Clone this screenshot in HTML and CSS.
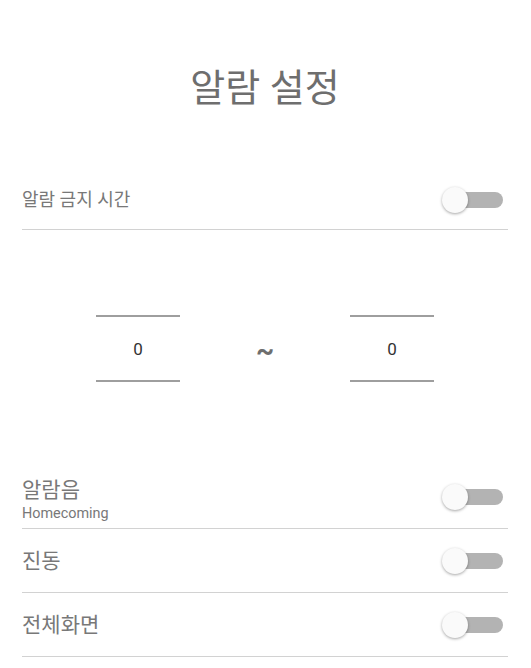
FILE: index.html
```html
<!DOCTYPE html>
<html lang="ko">
<head>
<meta charset="utf-8">
<link rel="stylesheet" href="styles.css">
</head>
<body>
<div class="page">
  <div class="header"><h1 class="title">알람 설정</h1></div>
  <div class="row row-first">
    <div class="label-sm">알람 금지 시간</div>
    <div class="switch"><span class="track"></span><span class="thumb"></span></div>
  </div>
  <div class="time-section">
    <div class="time-box">0</div>
    <div class="tilde">~</div>
    <div class="time-box">0</div>
  </div>
  <div class="row">
    <div class="label-group">
      <div class="label">알람음</div>
      <div class="sub">Homecoming</div>
    </div>
    <div class="switch"><span class="track"></span><span class="thumb"></span></div>
  </div>
  <div class="row">
    <div class="label">진동</div>
    <div class="switch"><span class="track"></span><span class="thumb"></span></div>
  </div>
  <div class="row">
    <div class="label">전체화면</div>
    <div class="switch"><span class="track"></span><span class="thumb"></span></div>
  </div>
</div>
</body>
</html>
```

FILE: styles.css
```css
html, body {
  margin: 0;
  padding: 0;
  background: #ffffff;
}
body {
  font-family: Roboto, "Noto Sans CJK KR", sans-serif;
  width: 531px;
  height: 668px;
  overflow: hidden;
}
.page {
  padding: 0 23px 0 22px;
}
.header {
  height: 170px;
  box-sizing: border-box;
  padding-top: 65px;
  text-align: center;
}
.title {
  margin: 0;
  font-size: 38px;
  line-height: 46px;
  font-weight: 400;
  color: #6e6e6e;
}
.row {
  height: 63px;
  border-bottom: 1px solid #d2d2d2;
  display: flex;
  align-items: center;
  justify-content: space-between;
}
.row-first {
  height: 59px;
}
.label-sm {
  font-size: 18px;
  color: #787878;
  padding-bottom: 3px;
}
.label {
  font-size: 21px;
  color: #787878;
  line-height: 26px;
}
.label-group {
  display: flex;
  flex-direction: column;
  padding-top: 8px;
  gap: 3px;
}
.label-group .label {
  line-height: 24px;
}
.sub {
  font-size: 14.4px;
  color: #787878;
  line-height: 18px;
}
.switch {
  position: relative;
  width: 61px;
  height: 26px;
  margin-right: 5px;
}
.track {
  position: absolute;
  right: 0;
  top: 5px;
  width: 55px;
  height: 16px;
  border-radius: 8px;
  background: #b3b3b3;
}
.thumb {
  position: absolute;
  left: 0;
  top: 0;
  width: 26px;
  height: 26px;
  border-radius: 50%;
  background: #fafafa;
  box-shadow: 0 1px 3px rgba(0,0,0,0.35);
}
.time-section {
  height: 235px;
  box-sizing: border-box;
  padding-top: 85px;
  display: flex;
  justify-content: center;
  align-items: flex-start;
}
.time-box {
  width: 84px;
  height: 67px;
  box-sizing: border-box;
  border-top: 2px solid #9e9e9e;
  border-bottom: 2px solid #9e9e9e;
  display: flex;
  align-items: center;
  justify-content: center;
  font-size: 17px;
  color: #333333;
  padding-top: 1px;
}
.tilde {
  width: 170px;
  height: 67px;
  display: flex;
  align-items: center;
  justify-content: center;
  font-size: 28px;
  font-weight: 700;
  color: #6e6e6e;
  padding-top: 4px;
  box-sizing: border-box;
}
```
